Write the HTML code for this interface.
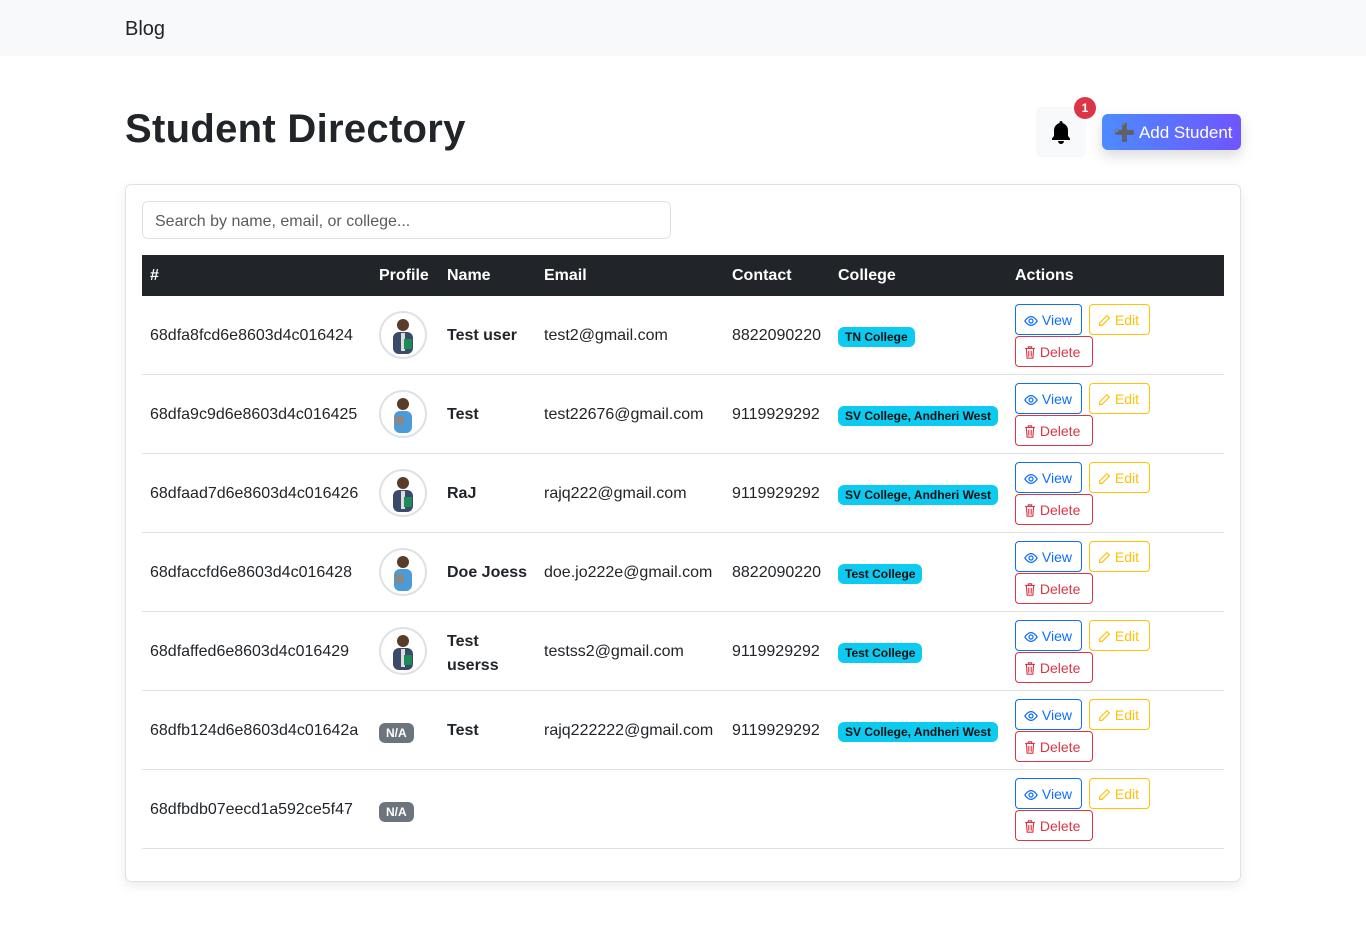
<!DOCTYPE html>
<html><head><meta charset="utf-8"><style>
*{box-sizing:border-box;margin:0;padding:0}
body{width:1366px;height:930px;background:#fff;font-family:"Liberation Sans",sans-serif;color:#212529;font-size:16px;position:relative;overflow:hidden}
.nav{height:56px;background:#f8f9fa}
.nav span{position:absolute;left:125px;top:18px;font-size:20px}
h1{position:absolute;left:125px;top:107px;font-size:40px;font-weight:bold;letter-spacing:0.3px}
.bell{position:absolute;left:1036px;top:107px;width:50px;height:50px;background:#f8f9fa;border-radius:6px}
.badge1{position:absolute;left:1074px;top:97px;width:22px;height:22px;border-radius:11px;background:#dc3545;color:#fff;font-size:12px;font-weight:bold;text-align:center;line-height:22px}
.add{position:absolute;left:1102px;top:114px;width:139px;height:36px;border-radius:6px;background:linear-gradient(90deg,#4d8bff,#6f55ff);color:#fff;font-size:17px;line-height:37px;padding-left:12px;box-shadow:0 6px 14px rgba(0,0,0,.15)}
.card{position:absolute;left:125px;top:184px;width:1116px;height:698px;border:1px solid #dee2e6;border-radius:6px;box-shadow:0 4px 12px rgba(0,0,0,.08)}
.search{position:absolute;left:16px;top:16px;width:529px;height:38px;border:1px solid #dee2e6;border-radius:6px;padding-left:12px;line-height:39px;color:#595c5f;font-size:16px}
.thead{position:absolute;left:16px;top:70px;width:1082px;height:41px;background:#212529;color:#fff;font-weight:bold}
.thead span,.row span.t{position:absolute}
.row{position:absolute;left:16px;width:1082px;height:79px;border-bottom:1px solid #dee2e6}
.av{position:absolute;left:237px;top:15px;width:48px;height:48px;border-radius:50%;border:2px solid #dee2e6;overflow:hidden;background:#fff}
.cb{display:inline-block;background:#0dcaf0;color:#111;font-size:12px;font-weight:bold;padding:3px 7px;border-radius:6px}
.na{display:inline-block;background:#6c757d;color:#fff;font-size:12px;font-weight:bold;padding:3px 7px;border-radius:6px}
.btn{position:absolute;height:31px;border:1px solid;border-radius:4px;font-size:14px;line-height:30px;padding-left:8px}
.v{left:873px;top:8px;width:67px;border-color:#0d6efd;color:#0d6efd}
.e{left:947px;top:8px;width:61px;border-color:#ffc107;color:#ffc107}
.d{left:873px;top:40px;width:78px;border-color:#dc3545;color:#dc3545}
.id{left:8px;top:31px}.nm{left:305px;top:31px;font-weight:bold}.em{left:402px;top:31px}.ct{left:590px;top:31px}.cl{left:696px;top:31px}.pf{left:237px;top:32px}
svg{vertical-align:-2px}
</style></head><body>
<div class="nav"><span>Blog</span></div>
<h1>Student Directory</h1>
<div class="bell"><svg style="position:absolute;left:14px;top:13px" width="22" height="24" viewBox="0 0 22 24"><path d="M11 1c-1 0-1.5.7-1.5 1.5v.6C6 4 4 7 4 10.5V16l-2 2.5V20h18v-1.5L18 16v-5.5C18 7 16 4 12.5 3.1v-.6C12.5 1.7 12 1 11 1z" fill="#000"/><path d="M8 21h6a3 3 0 0 1-6 0z" fill="#000"/></svg></div>
<div class="badge1">1</div>
<div class="add"><span style="color:#444">➕</span> Add Student</div>
<div class="card">
<div class="search">Search by name, email, or college...</div>
<div class="thead"><span style="left:8px;top:12px">#</span><span style="left:237px;top:12px">Profile</span><span style="left:305px;top:12px">Name</span><span style="left:402px;top:12px">Email</span><span style="left:590px;top:12px">Contact</span><span style="left:696px;top:12px">College</span><span style="left:873px;top:12px">Actions</span></div>

<div class="row" style="top:111px"><span class="t id">68dfa8fcd6e8603d4c016424</span><div class="av"><svg width="44" height="44"><circle cx="22" cy="12" r="6" fill="#5a3b28"/><rect x="12" y="19" width="20" height="22" rx="6" fill="#3b4a6b"/><rect x="20" y="20" width="4" height="18" fill="#ddd"/><rect x="23" y="26" width="8" height="10" fill="#1e8a5a"/></svg></div><span class="t nm">Test user</span><span class="t em">test2@gmail.com</span><span class="t ct">8822090220</span><span class="t cl" style="top:31px"><span class="cb">TN College</span></span>
<div class="btn v"><svg width="14" height="12" viewBox="0 0 16 12"><path d="M1 6s3-5 7-5 7 5 7 5-3 5-7 5-7-5-7-5z" fill="none" stroke="#0d6efd" stroke-width="1.4"/><circle cx="8" cy="6" r="2.3" fill="none" stroke="#0d6efd" stroke-width="1.4"/></svg> View</div><div class="btn e"><svg width="13" height="13" viewBox="0 0 16 16"><path d="M11 2l3 3-9 9H2v-3z" fill="none" stroke="#ffc107" stroke-width="1.4"/></svg> Edit</div><div class="btn d"><svg width="12" height="13" viewBox="0 0 14 16"><path d="M1 3h12M5 3V1h4v2M2.5 3l1 12h7l1-12M5.5 6v7M8.5 6v7" fill="none" stroke="#dc3545" stroke-width="1.4"/></svg> Delete</div></div>

<div class="row" style="top:190px"><span class="t id">68dfa9c9d6e8603d4c016425</span><div class="av"><svg width="44" height="44"><circle cx="22" cy="12" r="6" fill="#5a3b28"/><rect x="13" y="19" width="18" height="22" rx="6" fill="#4a9bd8"/><rect x="14" y="24" width="9" height="9" fill="#888"/></svg></div><span class="t nm">Test</span><span class="t em">test22676@gmail.com</span><span class="t ct">9119929292</span><span class="t cl" style="top:31px"><span class="cb">SV College, Andheri West</span></span>
<div class="btn v"><svg width="14" height="12" viewBox="0 0 16 12"><path d="M1 6s3-5 7-5 7 5 7 5-3 5-7 5-7-5-7-5z" fill="none" stroke="#0d6efd" stroke-width="1.4"/><circle cx="8" cy="6" r="2.3" fill="none" stroke="#0d6efd" stroke-width="1.4"/></svg> View</div><div class="btn e"><svg width="13" height="13" viewBox="0 0 16 16"><path d="M11 2l3 3-9 9H2v-3z" fill="none" stroke="#ffc107" stroke-width="1.4"/></svg> Edit</div><div class="btn d"><svg width="12" height="13" viewBox="0 0 14 16"><path d="M1 3h12M5 3V1h4v2M2.5 3l1 12h7l1-12M5.5 6v7M8.5 6v7" fill="none" stroke="#dc3545" stroke-width="1.4"/></svg> Delete</div></div>

<div class="row" style="top:269px"><span class="t id">68dfaad7d6e8603d4c016426</span><div class="av"><svg width="44" height="44"><circle cx="22" cy="12" r="6" fill="#5a3b28"/><rect x="12" y="19" width="20" height="22" rx="6" fill="#3b4a6b"/><rect x="20" y="20" width="4" height="18" fill="#ddd"/><rect x="23" y="26" width="8" height="10" fill="#1e8a5a"/></svg></div><span class="t nm">RaJ</span><span class="t em">rajq222@gmail.com</span><span class="t ct">9119929292</span><span class="t cl" style="top:31px"><span class="cb">SV College, Andheri West</span></span>
<div class="btn v"><svg width="14" height="12" viewBox="0 0 16 12"><path d="M1 6s3-5 7-5 7 5 7 5-3 5-7 5-7-5-7-5z" fill="none" stroke="#0d6efd" stroke-width="1.4"/><circle cx="8" cy="6" r="2.3" fill="none" stroke="#0d6efd" stroke-width="1.4"/></svg> View</div><div class="btn e"><svg width="13" height="13" viewBox="0 0 16 16"><path d="M11 2l3 3-9 9H2v-3z" fill="none" stroke="#ffc107" stroke-width="1.4"/></svg> Edit</div><div class="btn d"><svg width="12" height="13" viewBox="0 0 14 16"><path d="M1 3h12M5 3V1h4v2M2.5 3l1 12h7l1-12M5.5 6v7M8.5 6v7" fill="none" stroke="#dc3545" stroke-width="1.4"/></svg> Delete</div></div>

<div class="row" style="top:348px"><span class="t id">68dfaccfd6e8603d4c016428</span><div class="av"><svg width="44" height="44"><circle cx="22" cy="12" r="6" fill="#5a3b28"/><rect x="13" y="19" width="18" height="22" rx="6" fill="#4a9bd8"/><rect x="14" y="24" width="9" height="9" fill="#888"/></svg></div><span class="t nm">Doe Joess</span><span class="t em">doe.jo222e@gmail.com</span><span class="t ct">8822090220</span><span class="t cl" style="top:31px"><span class="cb">Test College</span></span>
<div class="btn v"><svg width="14" height="12" viewBox="0 0 16 12"><path d="M1 6s3-5 7-5 7 5 7 5-3 5-7 5-7-5-7-5z" fill="none" stroke="#0d6efd" stroke-width="1.4"/><circle cx="8" cy="6" r="2.3" fill="none" stroke="#0d6efd" stroke-width="1.4"/></svg> View</div><div class="btn e"><svg width="13" height="13" viewBox="0 0 16 16"><path d="M11 2l3 3-9 9H2v-3z" fill="none" stroke="#ffc107" stroke-width="1.4"/></svg> Edit</div><div class="btn d"><svg width="12" height="13" viewBox="0 0 14 16"><path d="M1 3h12M5 3V1h4v2M2.5 3l1 12h7l1-12M5.5 6v7M8.5 6v7" fill="none" stroke="#dc3545" stroke-width="1.4"/></svg> Delete</div></div>

<div class="row" style="top:427px"><span class="t id">68dfaffed6e8603d4c016429</span><div class="av"><svg width="44" height="44"><circle cx="22" cy="12" r="6" fill="#5a3b28"/><rect x="12" y="19" width="20" height="22" rx="6" fill="#3b4a6b"/><rect x="20" y="20" width="4" height="18" fill="#ddd"/><rect x="23" y="26" width="8" height="10" fill="#1e8a5a"/></svg></div><span class="t nm" style="top:18px;line-height:24px">Test<br>userss</span><span class="t em">testss2@gmail.com</span><span class="t ct">9119929292</span><span class="t cl" style="top:31px"><span class="cb">Test College</span></span>
<div class="btn v"><svg width="14" height="12" viewBox="0 0 16 12"><path d="M1 6s3-5 7-5 7 5 7 5-3 5-7 5-7-5-7-5z" fill="none" stroke="#0d6efd" stroke-width="1.4"/><circle cx="8" cy="6" r="2.3" fill="none" stroke="#0d6efd" stroke-width="1.4"/></svg> View</div><div class="btn e"><svg width="13" height="13" viewBox="0 0 16 16"><path d="M11 2l3 3-9 9H2v-3z" fill="none" stroke="#ffc107" stroke-width="1.4"/></svg> Edit</div><div class="btn d"><svg width="12" height="13" viewBox="0 0 14 16"><path d="M1 3h12M5 3V1h4v2M2.5 3l1 12h7l1-12M5.5 6v7M8.5 6v7" fill="none" stroke="#dc3545" stroke-width="1.4"/></svg> Delete</div></div>

<div class="row" style="top:506px"><span class="t id">68dfb124d6e8603d4c01642a</span><span class="t pf"><span class="na">N/A</span></span><span class="t nm">Test</span><span class="t em">rajq222222@gmail.com</span><span class="t ct">9119929292</span><span class="t cl" style="top:31px"><span class="cb">SV College, Andheri West</span></span>
<div class="btn v"><svg width="14" height="12" viewBox="0 0 16 12"><path d="M1 6s3-5 7-5 7 5 7 5-3 5-7 5-7-5-7-5z" fill="none" stroke="#0d6efd" stroke-width="1.4"/><circle cx="8" cy="6" r="2.3" fill="none" stroke="#0d6efd" stroke-width="1.4"/></svg> View</div><div class="btn e"><svg width="13" height="13" viewBox="0 0 16 16"><path d="M11 2l3 3-9 9H2v-3z" fill="none" stroke="#ffc107" stroke-width="1.4"/></svg> Edit</div><div class="btn d"><svg width="12" height="13" viewBox="0 0 14 16"><path d="M1 3h12M5 3V1h4v2M2.5 3l1 12h7l1-12M5.5 6v7M8.5 6v7" fill="none" stroke="#dc3545" stroke-width="1.4"/></svg> Delete</div></div>

<div class="row" style="top:585px"><span class="t id">68dfbdb07eecd1a592ce5f47</span><span class="t pf"><span class="na">N/A</span></span>
<div class="btn v"><svg width="14" height="12" viewBox="0 0 16 12"><path d="M1 6s3-5 7-5 7 5 7 5-3 5-7 5-7-5-7-5z" fill="none" stroke="#0d6efd" stroke-width="1.4"/><circle cx="8" cy="6" r="2.3" fill="none" stroke="#0d6efd" stroke-width="1.4"/></svg> View</div><div class="btn e"><svg width="13" height="13" viewBox="0 0 16 16"><path d="M11 2l3 3-9 9H2v-3z" fill="none" stroke="#ffc107" stroke-width="1.4"/></svg> Edit</div><div class="btn d"><svg width="12" height="13" viewBox="0 0 14 16"><path d="M1 3h12M5 3V1h4v2M2.5 3l1 12h7l1-12M5.5 6v7M8.5 6v7" fill="none" stroke="#dc3545" stroke-width="1.4"/></svg> Delete</div></div>
</div>
</body></html>
